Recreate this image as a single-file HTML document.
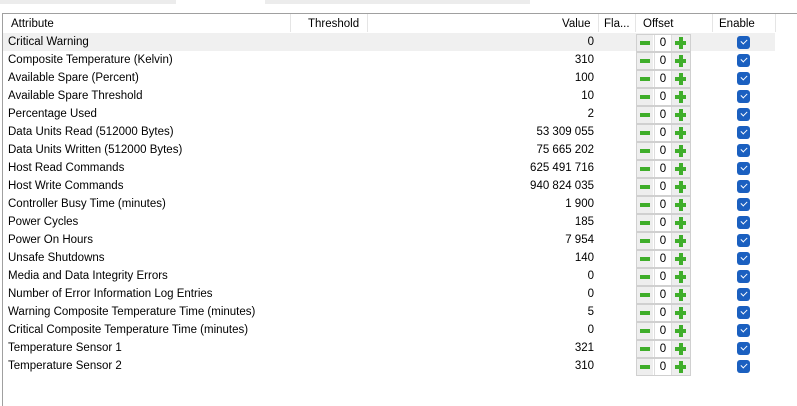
<!DOCTYPE html><html><head><style>
body{margin:0;width:797px;height:406px;background:#fff;font-family:"Liberation Sans",sans-serif;font-size:11.5px;color:#000;position:relative;overflow:hidden}
.tb{position:absolute;top:0;height:4px;background:#ececec}
.frame{position:absolute;left:2px;top:13px;right:0;bottom:0;border-left:1px solid #a0a0a0;border-top:1px solid #a0a0a0}
.hd{position:absolute;top:15px;height:18px;line-height:18px;color:#000}
.sep{position:absolute;top:14px;height:18px;width:1px;background:#e5e5e5}
.row{position:absolute;left:3px;width:772px;height:18px;line-height:18px}
.row.sel{background:#f0f0f0}
.a{position:absolute;left:5px}
.v{position:absolute;right:181px;text-align:right}
.w{position:absolute;left:633px;top:1px;width:53px;height:16px;border:1px solid #d0d0d0;background:#fff}
.m{position:absolute;left:0;top:0;width:16px;height:16px;background:#eee}
.m:after{content:"";position:absolute;left:3px;top:6px;width:10px;height:4px;background:#3fae2a}
.f{position:absolute;left:17px;top:0;width:16px;height:16px;border-left:1px solid #ddd;border-right:1px solid #ddd;text-align:center;line-height:16px}
.p{position:absolute;left:35px;top:0;width:18px;height:16px;background:#eee}
.p:before{content:"";position:absolute;left:3px;top:6px;width:11px;height:4px;background:#3fae2a}
.p:after{content:"";position:absolute;left:7px;top:2px;width:4px;height:12px;background:#3fae2a}
.c{position:absolute;left:734px;top:3px;width:13px;height:13px;border-radius:3px;background:#1b60c0}
.c:after{content:"";position:absolute;left:4px;top:3px;width:5px;height:3px;border-left:1px solid #fff;border-bottom:1px solid #fff;transform:rotate(-45deg)}
</style></head><body>
<div class="tb" style="left:0;width:176px"></div><div class="tb" style="left:265px;width:265px"></div>
<div class="frame"></div>
<div class="hd" style="left:11px">Attribute</div>
<div class="hd" style="left:308px">Threshold</div>
<div class="hd" style="left:562px">Value</div>
<div class="hd" style="left:604px">Fla...</div>
<div class="hd" style="left:643px">Offset</div>
<div class="hd" style="left:719px">Enable</div>
<div class="sep" style="left:290px"></div><div class="sep" style="left:367px"></div><div class="sep" style="left:598px"></div><div class="sep" style="left:635px"></div><div class="sep" style="left:712px"></div><div class="sep" style="left:775px"></div>
<div id="rows"></div>
<script>
var d=[["Critical Warning","0"],["Composite Temperature (Kelvin)","310"],["Available Spare (Percent)","100"],["Available Spare Threshold","10"],["Percentage Used","2"],["Data Units Read (512000 Bytes)","53 309 055"],["Data Units Written (512000 Bytes)","75 665 202"],["Host Read Commands","625 491 716"],["Host Write Commands","940 824 035"],["Controller Busy Time (minutes)","1 900"],["Power Cycles","185"],["Power On Hours","7 954"],["Unsafe Shutdowns","140"],["Media and Data Integrity Errors","0"],["Number of Error Information Log Entries","0"],["Warning Composite Temperature Time (minutes)","5"],["Critical Composite Temperature Time (minutes)","0"],["Temperature Sensor 1","321"],["Temperature Sensor 2","310"]];
var h="";d.forEach(function(r,i){h+='<div class="row'+(i==0?' sel':'')+'" style="top:'+(33+i*18)+'px"><span class="a">'+r[0]+'</span><span class="v">'+r[1]+'</span><div class="w"><div class="m"></div><div class="f">0</div><div class="p"></div></div><div class="c"></div></div>'});
document.getElementById("rows").innerHTML=h;
</script>
</body></html>
